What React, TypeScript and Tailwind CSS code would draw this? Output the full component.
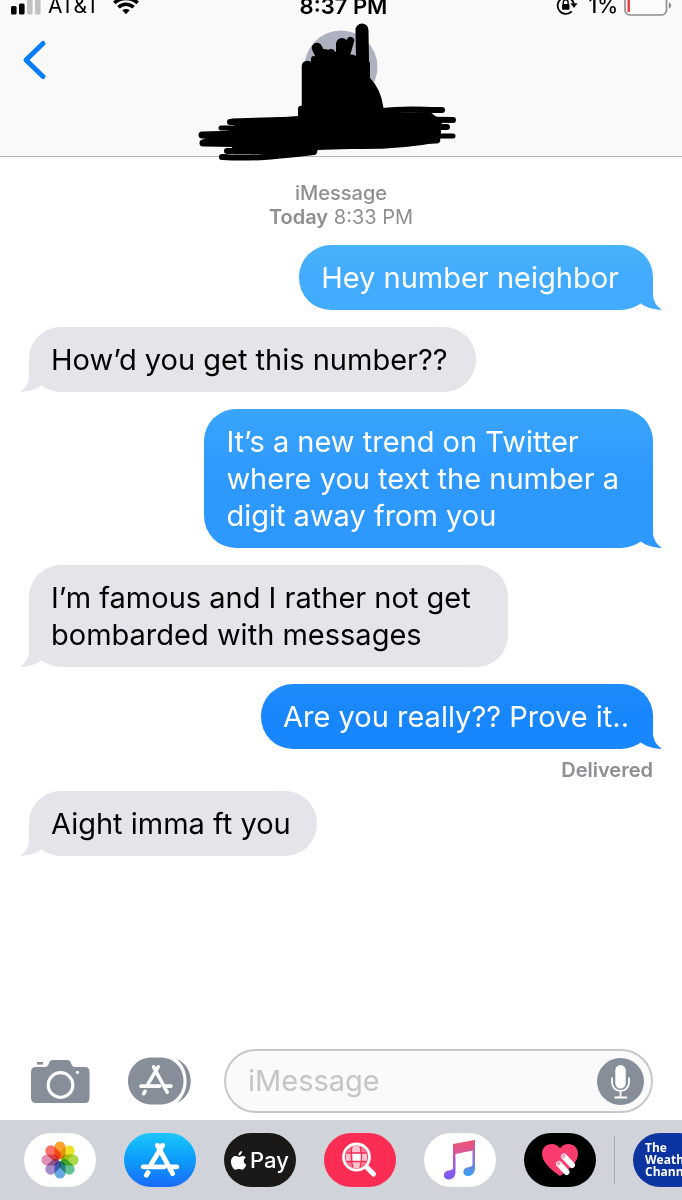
import React from "react";

type Message = {
  from: "me" | "them";
  text: string;
  pad: string;
  tone?: string;
  tail?: string;
  status?: string;
};

const messages: Message[] = [
  {
    from: "me",
    text: "Hey number neighbor",
    pad: "pr-[34px]",
    tone: "from-[#48b2fb] to-[#42abfe]",
    tail: "text-[#42abfe]",
  },
  { from: "them", text: "How’d you get this number??", pad: "pr-7" },
  {
    from: "me",
    text: "It’s a new trend on Twitter\nwhere you text the number a\ndigit away from you",
    pad: "pr-[34px]",
    tone: "from-[#3aa5fb] to-[#2d98fe]",
    tail: "text-[#2d98fe]",
  },
  { from: "them", text: "I’m famous and I rather not get\nbombarded with messages", pad: "pr-[37px]" },
  {
    from: "me",
    text: "Are you really?? Prove it..",
    pad: "pr-6",
    tone: "from-[#1f8cfc] to-[#1886fc]",
    tail: "text-[#1886fc]",
    status: "Delivered",
  },
  { from: "them", text: "Aight imma ft you", pad: "pr-[26px]" },
];

function Tail({ className }: { className: string }) {
  return (
    <svg className={`absolute bottom-0 h-[34px] w-[32px] ${className}`} viewBox="0 -8 32 34" fill="currentColor" aria-hidden="true">
      <path d="M0 -8H23V11C23.500 17 26 22 32 25.800C24 26 16 23.500 11 19.500L0 19Z" />
    </svg>
  );
}

function Bubble({ message }: { message: Message }) {
  const mine = message.from === "me";
  return (
    <li className={`flex flex-col ${mine ? "items-end" : "items-start"}`}>
      <div
        className={`relative rounded-[32px] py-[14px] pl-[22px] text-[29px] leading-[37px] whitespace-pre-line ${message.pad} ${
          mine ? `bg-linear-to-b to-50% text-white ${message.tone}` : "bg-[#e5e4ea] text-black"
        }`}
      >
        <Tail className={mine ? `-right-[9px] ${message.tail}` : "-left-[9px] -scale-x-100 text-[#e5e4ea]"} />
        <span className="relative">{message.text}</span>
      </div>
      {message.status && (
        <p className="mt-[15px] mb-[-2px] text-[20px] leading-3 font-semibold text-[#8e8e93]">{message.status}</p>
      )}
    </li>
  );
}

function StatusBar() {
  return (
    <div className="flex h-4 justify-between pr-[10px] pl-[11px] leading-[12px] text-black">
      <div className="flex flex-1 items-start text-[21px]">
        <svg className="h-4 w-[30px] shrink-0" viewBox="0 0 30 16" aria-hidden="true">
          <rect x="0" y="6" width="5.6" height="8.6" rx="1.6" />
          <rect x="8" y="3.5" width="5.6" height="11" rx="1.6" />
          <rect x="16" y="-4" width="5.6" height="18.6" rx="1.6" fill="#c2c2c2" />
          <rect x="24" y="-4" width="5.6" height="18.6" rx="1.6" fill="#c2c2c2" />
        </svg>
        <span className="ml-[7px]">AT&amp;T</span>
        <svg className="ml-[14px] h-4 w-[26px]" viewBox="0 0 28 16" fill="none" stroke="#000" strokeWidth="3.8" aria-hidden="true">
          <path d="M1.5 2.5C8-4 20-4 26.500 2.500" />
          <path d="M5.800 7.300C10.500 2.800 17.500 2.800 22.200 7.300" />
          <path d="M10 10.500C12.300 8.600 15.700 8.600 18 10.500L14 14.600Z" fill="#000" stroke="none" />
        </svg>
      </div>
      <span className="pl-1 text-[22px] font-semibold">8:37 PM</span>
      <div className="flex flex-1 items-start justify-end text-[21px]">
        <svg className="h-4 w-[22px]" viewBox="0 0 22 16" fill="none" stroke="#000" strokeWidth="1.8" aria-hidden="true">
          <path d="M15.800 11.300A8.200 8.200 0 1 1 17.800 3.500" />
          <path d="M14.300 3.300H21.600L18 8Z" fill="#000" stroke="none" />
          <rect x="6" y="4" width="7.500" height="5.800" rx="1" fill="#000" stroke="none" />
          <path d="M7.300 4V2.300A2.400 2.400 0 0 1 12.100 2.300V4" strokeWidth="1.400" />
        </svg>
        <span className="ml-[10px] font-medium">1%</span>
        <svg className="ml-[6px] h-4 w-[48px]" viewBox="0 0 48 16" aria-hidden="true">
          <rect x="1" y="-8" width="41.500" height="23" rx="5" fill="#fbfbfb" stroke="#8c8c8c" strokeWidth="1.600" />
          <rect x="3.500" y="-4" width="2.400" height="16" fill="#f5333f" />
          <path d="M44.800 2.500C48 3.500 48 7.500 44.800 8.500Z" fill="#8c8c8c" />
        </svg>
      </div>
    </div>
  );
}

function Contact() {
  return (
    <svg
      className="absolute top-5 left-1/2 h-[145px] w-[300px] -translate-x-1/2"
      viewBox="191 20 300 145"
      role="img"
      aria-label="Contact"
    >
      <circle cx="341" cy="67" r="36.500" fill="#aeb2c0" />
      <path d="M302 118V66L307 61L314 62L318 56L326 50L337 52L342 62L350 54L357 62H370V78Q381 89 383.500 108V118H298V108Q299 105 302 106Z" />
      <g fill="none" stroke="#000" strokeLinecap="round" strokeLinejoin="round">
        <path d="M307 66V110M317 48L325 64" strokeWidth="10.500" />
        <path d="M314 59V64" strokeWidth="6" />
        <path d="M325 53V64M331 53L333 64" strokeWidth="8" />
        <path d="M342 44V66" strokeWidth="12" />
        <path d="M350.500 40.500L346 56" strokeWidth="7.500" />
        <path d="M352 60V70" strokeWidth="11" />
        <path d="M362 30L363 90" strokeWidth="13" />
        <path d="M202 135L270 133M203 143H252" strokeWidth="7" />
        <path d="M232 121L300 119M221 128L280 128" strokeWidth="5" />
        <path d="M230 122C270 123 310 117 350 116" strokeWidth="6" />
        <path d="M222 157C255 159 280 156 314 152" strokeWidth="6" />
        <path d="M227 151L315 149" strokeWidth="6" />
        <path d="M382 111C405 108 422 110 442 110" strokeWidth="6" />
        <path d="M385 119L453 120M385 127H447" strokeWidth="6" />
        <path d="M380 136L453 136M370 142L437 141" strokeWidth="5" />
      </g>
      <path d="M203 139L232 129L238 120L300 118L355 113L430 112L442 121L440 142Q400 150 350 149L317 150L310 154H234L232 147L204 146Z" />
    </svg>
  );
}

function Header() {
  return (
    <header className="relative h-[157px] shrink-0 border-b border-[#b5b5b7] bg-[#f9f9f9]">
      <StatusBar />
      <button type="button" aria-label="Back" className="mt-[23px] ml-[21px] block">
        <svg className="h-[42px] w-[27px]" viewBox="0 0 27 42" fill="none" stroke="#087dfc" strokeWidth="5" strokeLinecap="round" strokeLinejoin="round" aria-hidden="true">
          <path d="M22 4.500L5 21L22 37.500" />
        </svg>
      </button>
      <Contact />
    </header>
  );
}

function CameraIcon() {
  return (
    <svg className="h-[45px] w-[59px]" viewBox="0 0 59 45" aria-hidden="true">
      <path d="M5 8H14Q17 8 18 4Q19 1 22 1H36Q39 1 40 4Q41 8 44 8H54Q58.500 8 58.500 13V39Q58.500 44 54 44H5Q0 44 0 39V13Q0 8 5 8Z" fill="#868e99" />
      <rect x="6" y="3" width="6" height="2.600" fill="#868e99" />
      <circle cx="29.500" cy="26" r="12.300" fill="none" stroke="#fff" strokeWidth="3.200" />
      <circle cx="46.500" cy="13.300" r="1.600" fill="#fff" />
    </svg>
  );
}

function StoreGlyph() {
  return (
    <g fill="none" stroke="#fff" strokeLinecap="round">
      <path d="M20.500 2L8.500 22M15.500 2L30 29M5 30.500L6.500 28M2 22.500H22M28 22.500H34" />
    </g>
  );
}

function DrawerIcon() {
  return (
    <svg className="h-12 w-16" viewBox="0 0 64 48" aria-hidden="true">
      <path d="M24 .5H32C46 .5 55.500 11 55.500 24S46 47.500 32 47.500H24C10 47.500 0 37 0 24S10 .5 24 .5Z" fill="#868e99" />
      <path d="M48.500 2C67 9 68 38 48.500 46C62 36 62 12 48.500 2Z" fill="#868e99" />
      <g transform="translate(11 8) scale(.94)" strokeWidth="3.800">
        <StoreGlyph />
      </g>
    </svg>
  );
}

function MicIcon() {
  return (
    <svg className="size-[47px]" viewBox="0 0 47 47" aria-hidden="true">
      <circle cx="23.500" cy="23.500" r="23.500" fill="#868e99" />
      <rect x="18.300" y="7" width="10.400" height="23.500" rx="5.200" fill="#fff" />
      <path d="M15 19.500V24.500A8.500 8.500 0 0 0 32 24.500V19.500M23.500 33V39M17.500 39.500H30" fill="none" stroke="#fff" strokeWidth="1.800" />
    </svg>
  );
}

function Composer() {
  return (
    <form className="flex items-center pr-[29px] pb-[7px] pl-[31px]" onSubmit={(e) => e.preventDefault()}>
      <button type="button" aria-label="Camera">
        <CameraIcon />
      </button>
      <button type="button" aria-label="Apps" className="ml-[38px]">
        <DrawerIcon />
      </button>
      <div className="ml-8 flex h-16 min-w-0 flex-1 items-center rounded-full border-2 border-[#c8c8cc] bg-[#fafafa] pr-[7px] pl-[22px]">
        <input
          type="text"
          aria-label="iMessage"
          placeholder="iMessage"
          className="min-w-0 flex-1 bg-transparent text-[29px] outline-none placeholder:text-[#c4c4c9]"
        />
        <button type="button" aria-label="Record audio">
          <MicIcon />
        </button>
      </div>
    </form>
  );
}

const petals = ["#fb9a1e", "#ebe01f", "#a6d63b", "#5cbf8a", "#5aa2e0", "#a184c6", "#dd86b0", "#f8685a"];

function PhotosIcon() {
  return (
    <svg className="size-[38px]" viewBox="-19 -19 38 38" aria-hidden="true">
      {petals.map((color, i) => (
        <rect key={color} x="-5.500" y="-18.500" width="11" height="17.500" rx="5.500" fill={color} fillOpacity=".94" className="mix-blend-multiply" transform={`rotate(${i * 45})`} />
      ))}
    </svg>
  );
}

function AppStoreIcon() {
  return (
    <svg className="h-[36px] w-[40px]" viewBox="-1 -1 38 34" strokeWidth="4.600" aria-hidden="true">
      <StoreGlyph />
    </svg>
  );
}

function ApplePayIcon() {
  return (
    <span className="flex items-center text-[22px] font-medium text-white">
      <svg className="mr-[3px] h-[19px] w-[16px]" viewBox="0 0 16 19" fill="#fff" aria-hidden="true">
        <path d="M11 0C11.200 2.500 9.200 4.500 7.400 4.500C7.100 2.300 9 .3 11 0ZM14.800 6.500C11.800 8.400 12.200 12.400 15.300 13.700C14.500 16 12.900 18.700 11.200 18.700C9.900 18.700 9.500 18 8 18C6.500 18 6 18.700 4.800 18.700C2.300 18.700 0 14.300 0 10.700C0 7 2.400 5.100 4.600 5.100C6.100 5.100 7.100 6 8.100 6C9 6 10.200 5 12 5C12.700 5 14 5.400 14.800 6.500Z" />
      </svg>
      Pay
    </span>
  );
}

function ImagesIcon() {
  return (
    <svg className="h-[38px] w-[38px]" viewBox="0 0 38 38" aria-hidden="true">
      <circle cx="15.500" cy="16" r="11" fill="#ff7e97" />
      <path d="M11 5H19V11H11ZM5 11H11V20H5ZM20 12H26V20H20ZM11 20H20V27H11Z" fill="#ffc3cf" />
      <path d="M11.500 11.500H20V20H11.500Z" fill="#fff" />
      <path d="M11 5Q9 16 12 27M19 5Q22 16 19 27M5 12H26M5 20.500H26" fill="none" stroke="#fc2d55" strokeWidth="1.300" />
      <circle cx="15.500" cy="16" r="13" fill="none" stroke="#fff" strokeWidth="2.800" />
      <path d="M25.500 26L32.500 33" stroke="#fff" strokeWidth="5" strokeLinecap="round" />
    </svg>
  );
}

function MusicIcon() {
  return (
    <svg className="h-[42px] w-[34px]" viewBox="0 0 34 42" aria-hidden="true">
      <defs>
        <linearGradient id="note" x1="0" y1="0" x2="0" y2="1">
          <stop offset="0" stopColor="#f0506e" />
          <stop offset=".3" stopColor="#dc5693" />
          <stop offset=".65" stopColor="#9c5be8" />
          <stop offset="1" stopColor="#7457f5" />
        </linearGradient>
        <linearGradient id="stem" x1="0" y1="0" x2="0" y2="1">
          <stop offset="0" stopColor="#f0506e" />
          <stop offset=".5" stopColor="#8c72db" />
          <stop offset="1" stopColor="#35a0ef" />
        </linearGradient>
      </defs>
      <path d="M10 5L32 1V11L12.500 15V33C12.500 38 9 40.500 5.500 40.500C-.5 40.500-.5 33 4.500 31.800C8 31 10 31.500 10 28Z" fill="url(#note)" />
      <path d="M29.500 2L32 1V29C32 34 29 37 25 37C19 37 19 29.500 24 28.500C27.500 27.800 29.500 28 29.500 24.500Z" fill="url(#stem)" />
    </svg>
  );
}

function TouchIcon() {
  return (
    <svg className="h-[34px] w-[38px]" viewBox="0 0 38 34" aria-hidden="true">
      <path d="M19 33C12 28 1 20 1 11C1 0 14-2 19 5.500C24-2 37 0 37 11C37 20 26 28 19 33Z" fill="#fb3b6e" />
      <g stroke="#fff" strokeWidth="6" strokeLinecap="round">
        <path d="M18 21L25.500 29M23 13.500L31 22" />
      </g>
      <circle cx="17.500" cy="20.500" r="2" fill="#f9a3bb" />
      <circle cx="22.500" cy="13" r="2" fill="#f9a3bb" />
    </svg>
  );
}

const apps = [
  { name: "Photos", tone: "bg-white", icon: <PhotosIcon /> },
  { name: "App Store", tone: "bg-linear-to-b from-[#1dc7fa] to-[#1b6af8]", icon: <AppStoreIcon /> },
  { name: "Apple Pay", tone: "bg-[#1a1918]", icon: <ApplePayIcon /> },
  { name: "Images", tone: "bg-[#fc2d55]", icon: <ImagesIcon /> },
  { name: "Music", tone: "bg-white", icon: <MusicIcon /> },
  { name: "Digital Touch", tone: "bg-black", icon: <TouchIcon /> },
];

function AppDrawer() {
  return (
    <nav aria-label="iMessage apps" className="flex h-20 shrink-0 items-center gap-7 overflow-hidden bg-[#d1d3da] pl-6">
      {apps.map((app) => (
        <button
          key={app.name}
          type="button"
          aria-label={app.name}
          className={`flex h-[54px] w-[72px] shrink-0 items-center justify-center rounded-[27px] ${app.tone}`}
        >
          {app.icon}
        </button>
      ))}
      <div className="-mx-[10px] h-12 w-px shrink-0 bg-[#abadb4]" />
      <button
        type="button"
        className="flex h-[54px] w-[72px] shrink-0 flex-col items-start justify-center overflow-hidden rounded-[27px] bg-[#0b34a0] pl-3 text-left font-['Open_Sans',sans-serif] text-[12px] leading-[12px] font-bold text-white"
      >
        <span>The</span>
        <span>Weather</span>
        <span>Channel</span>
      </button>
    </nav>
  );
}

export default function App() {
  return (
    <div className="flex min-h-screen flex-col overflow-x-hidden bg-white font-['Inter',sans-serif]">
      <Header />
      <main className="flex-1 px-[29px] pt-6">
        <p className="text-center text-[20px] leading-6 text-[#8e8e93]">
          <span className="font-medium">iMessage</span>
          <br />
          <span className="font-semibold">Today</span> 8:33 PM
        </p>
        <ul className="mt-4 flex flex-col gap-[17px]">
          {messages.map((message) => (
            <Bubble key={message.text} message={message} />
          ))}
        </ul>
      </main>
      <Composer />
      <AppDrawer />
    </div>
  );
}
